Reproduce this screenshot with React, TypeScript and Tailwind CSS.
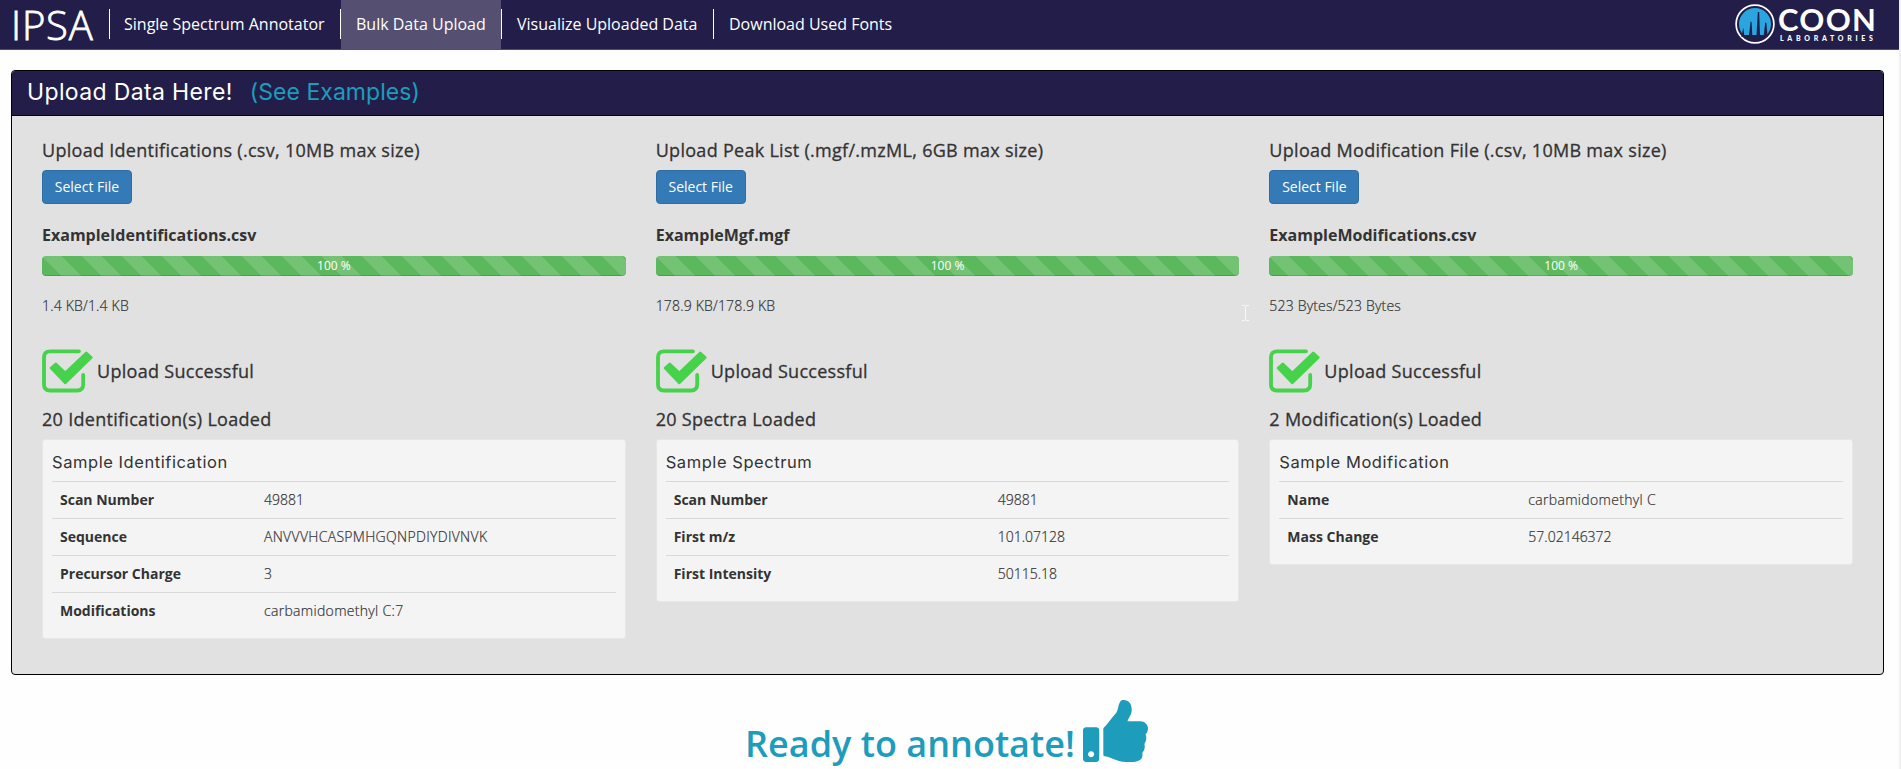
import React from "react";

type Row = [string, string];
type Upload = {
  title: string;
  file: string;
  size: string;
  loaded: string;
  sample: string;
  labelWidth: string;
  rows: Row[];
};

const uploads: Upload[] = [
  {
    title: "Upload Identifications (.csv, 10MB max size)",
    file: "ExampleIdentifications.csv",
    size: "1.4 KB/1.4 KB",
    loaded: "20 Identification(s) Loaded",
    sample: "Sample Identification",
    labelWidth: "w-[204px]",
    rows: [
      ["Scan Number", "49881"],
      ["Sequence", "ANVVVHCASPMHGQNPDIYDIVNVK"],
      ["Precursor Charge", "3"],
      ["Modifications", "carbamidomethyl C:7"],
    ],
  },
  {
    title: "Upload Peak List (.mgf/.mzML, 6GB max size)",
    file: "ExampleMgf.mgf",
    size: "178.9 KB/178.9 KB",
    loaded: "20 Spectra Loaded",
    sample: "Sample Spectrum",
    labelWidth: "w-[324px]",
    rows: [
      ["Scan Number", "49881"],
      ["First m/z", "101.07128"],
      ["First Intensity", "50115.18"],
    ],
  },
  {
    title: "Upload Modification File (.csv, 10MB max size)",
    file: "ExampleModifications.csv",
    size: "523 Bytes/523 Bytes",
    loaded: "2 Modification(s) Loaded",
    sample: "Sample Modification",
    labelWidth: "w-[241px]",
    rows: [
      ["Name", "carbamidomethyl C"],
      ["Mass Change", "57.02146372"],
    ],
  },
];

const heading = "text-[18px] leading-5 tracking-[0.29px] [-webkit-text-stroke:0.3px]";

function CheckIcon() {
  return (
    <svg className="h-[44px] w-[51px] shrink-0" viewBox="0 0 51 44">
      <path
        d="M37 2.300H8Q2 2.300 2 8.300V35.500Q2 41.500 8 41.500H35Q41.200 41.500 41.200 35.500V26"
        fill="none"
        stroke="#46d24b"
        strokeWidth="3.800"
        strokeLinecap="round"
      />
      <path
        d="M9.200 19L13.800 15L23.300 24L44.300 4L49.200 8.500L23.300 33.800Z"
        fill="#46d24b"
        stroke="#46d24b"
        strokeWidth="2.800"
        strokeLinejoin="round"
      />
    </svg>
  );
}

function CoonLogo() {
  return (
    <div className="mr-[21px] flex h-[49px] w-[143px] items-start pt-1">
      <svg className="h-10 w-10 shrink-0" viewBox="0 0 40 40">
        <circle cx="20" cy="20" r="18.900" fill="#231e49" stroke="#fff" strokeWidth="1.700" />
        <path d="M8.500 31.200A16 16 0 1 1 31.500 31.200Z" fill="#2aa5df" />
        <path
          d="M6.500 32L8.300 23.500L9.200 31H14L15.600 17.500L16.600 18L17.300 31H21.500L22.800 8H24.200L25 31H28.800L30.200 18.500L31.400 19L32.500 31V33H6.500Z"
          fill="#231e49"
        />
      </svg>
      <div className="ml-[3px] flex flex-col font-['Lato',sans-serif] text-white">
        <span className="text-[31px] leading-[30px] font-bold tracking-[1.300px]">COON</span>
        <span className="mt-px ml-[2px] text-[7px] leading-[7px] font-black tracking-[3.700px]">LABORATORIES</span>
      </div>
    </div>
  );
}

function UploadColumn({ u }: { u: Upload }) {
  return (
    <section className="flex-1 px-[15px]">
      <h4 className={heading}>{u.title}</h4>
      <button className="mt-[10px] block h-[34px] w-[90px] rounded border border-[#2e6da4] bg-[#337ab7] text-[14px] leading-5 text-white">
        Select File
      </button>
      <div className="mt-[20px] text-[16px] leading-[22px] font-bold">{u.file}</div>
      <div className="mt-[10px] h-5 rounded bg-[#5cb85c] bg-[linear-gradient(45deg,rgba(255,255,255,.15)_25%,transparent_25%,transparent_50%,rgba(255,255,255,.15)_50%,rgba(255,255,255,.15)_75%,transparent_75%,transparent)] bg-[length:40px_40px] text-center text-[12px] leading-5 text-white shadow-[inset_0_-1px_0_rgba(0,0,0,.15)]">
        100 %
      </div>
      <div className="mt-[20px] text-[14px] leading-5 font-light tracking-[0.18px] [-webkit-text-stroke:0.2px]">{u.size}</div>
      <div className="mt-[33px] flex h-[44px] items-center">
        <CheckIcon />
        <span className={"ml-1 " + heading}>Upload Successful</span>
      </div>
      <h4 className={"mt-[16px] " + heading}>{u.loaded}</h4>
      <div className="mt-[10px] rounded-[3px] border border-[#e7e7e7] bg-[#f4f4f4] px-[9px] pt-[9px] pb-[9px]">
        <div className="pt-[3px] pb-[9px] font-['Inter',sans-serif] text-[16.5px] leading-[20px] tracking-[0.56px]">
          {u.sample}
        </div>
        {u.rows.map(([k, v]) => (
          <div key={k} className="flex h-[37px] items-center border-t border-[#d9d9d9] px-2 pb-px text-[14px]">
            <span className={"shrink-0 font-bold " + u.labelWidth}>{k}</span>
            <span
              className={
                "font-light [-webkit-text-stroke:0.2px] " + (/[A-Za-z]/.test(v) ? "tracking-[0.31px]" : "tracking-normal")
              }
            >
              {v}
            </span>
          </div>
        ))}
      </div>
    </section>
  );
}

export default function App() {
  return (
    <div className="relative h-[769px] overflow-hidden border-r-2 border-[#f0f0f0] bg-[#fefefe] font-['Open_Sans',sans-serif] text-[#333]">
      <nav className="flex h-[50px] items-start border-b border-[#514b6d] bg-[#231e49] text-[16px] text-white">
        <span className="w-[109px] pl-[11px] text-[40px] leading-[50px] font-light tracking-[0.8px] [-webkit-text-stroke:0.8px]">
          IPSA
        </span>
        <a className="mt-[9px] flex h-[30px] w-[231px] items-center border-l border-white pl-[14px]">Single Spectrum Annotator</a>
        <span className="mt-[9px] h-[30px] w-px bg-white" />
        <a className="flex h-[49px] w-[160px] items-center bg-[#554f72] pb-px pl-[15px]">Bulk Data Upload</a>
        <a className="mt-[9px] flex h-[30px] w-[212px] items-center border-l border-white pl-[15px]">Visualize Uploaded Data</a>
        <a className="mt-[9px] flex h-[30px] items-center border-l border-white pl-[15px]">Download Used Fonts</a>
        <div className="ml-auto">
          <CoonLogo />
        </div>
      </nav>
      <main className="mt-5 mr-[15px] ml-[11px] h-[605px] rounded border border-black bg-[#e1e1e1]">
        <header className="flex h-[45px] items-center rounded-t-[3px] border-b border-black bg-[#231e49] pb-px pl-[15px] font-['Inter',sans-serif] text-[23px] tracking-[0.36px] text-white">
          <span>Upload Data Here!</span>
          <span className="ml-[17px] tracking-[0.05px] text-[#1d9cbc]">(See Examples)</span>
        </header>
        <div className="flex px-[15px] pt-[24px]">
          {uploads.map((u) => (
            <UploadColumn key={u.title} u={u} />
          ))}
        </div>
      </main>
      <div className="flex justify-center pt-[25px] pr-[6px] text-[#1d9cbc]">
        <span className="mt-[24px] text-[36px] leading-[40px] font-semibold">Ready to annotate!</span>
        <svg className="ml-2 h-[62px] w-[65px]" viewBox="0 0 512 512" preserveAspectRatio="none" fill="currentColor">
          <path d="M104 224H24c-13.255 0-24 10.745-24 24v240c0 13.255 10.745 24 24 24h80c13.255 0 24-10.745 24-24V248c0-13.255-10.745-24-24-24zM64 472c-13.255 0-24-10.745-24-24s10.745-24 24-24 24 10.745 24 24-10.745 24-24 24zM384 81.452c0 42.416-25.970 66.208-33.277 94.548h101.723c33.397 0 59.397 27.746 59.553 58.098.084 17.938-7.546 37.249-19.439 49.197l-.11.110c9.836 23.337 8.237 56.037-9.308 79.469 8.681 25.895-.069 57.704-16.382 74.757 4.298 17.598 2.244 32.575-6.148 44.632C440.202 511.587 389.616 512 346.839 512l-2.845-.001c-48.287-.017-87.806-17.598-119.560-31.725-15.957-7.099-36.821-15.887-52.651-16.178-6.540-.120-11.783-5.457-11.783-11.998v-213.770c0-3.200 1.282-6.271 3.558-8.521 39.614-39.144 56.648-80.587 89.117-113.111 14.804-14.832 20.188-37.236 25.393-58.902C282.515 39.293 291.817 0 312 0c24 0 72 8 72 81.452z" />
        </svg>
      </div>
      <svg className="pointer-events-none absolute top-[305px] left-[1242px] h-4 w-[7px]" viewBox="0 0 7 16">
        <path d="M0 .5H3M4 .5H7M3.500 1V15M0 15.500H3M4 15.500H7" stroke="#f8f8f8" fill="none" />
      </svg>
    </div>
  );
}
